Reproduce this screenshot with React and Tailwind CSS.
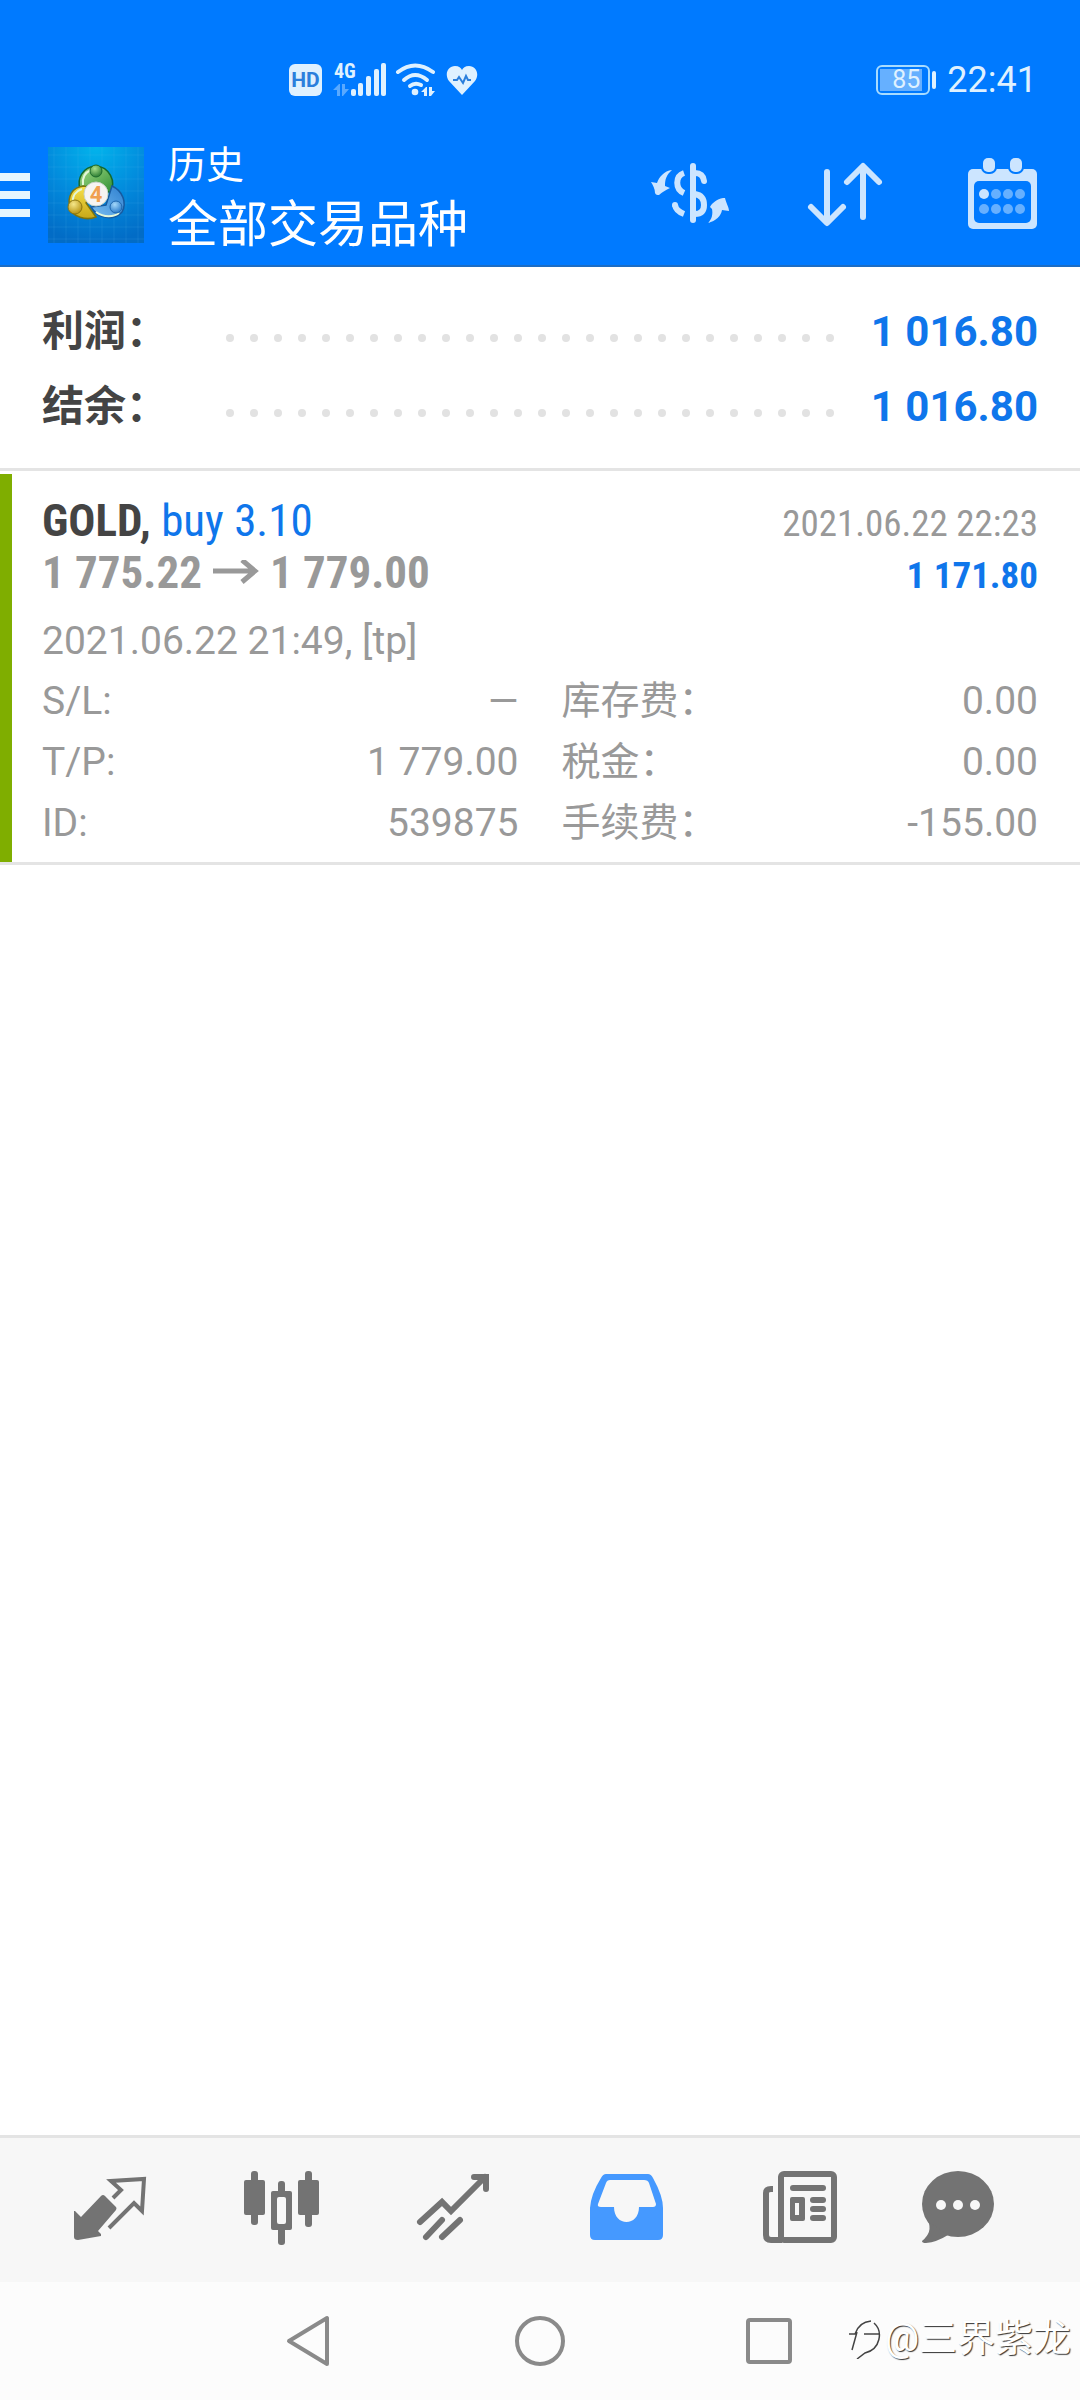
import React from "react";

const summary = [
  { label: "利润：", value: "1 016.80" },
  { label: "结余：", value: "1 016.80" },
];

const details = [
  { label: "S/L:", value: "—", label2: "库存费：", value2: "0.00" },
  { label: "T/P:", value: "1 779.00", label2: "税金：", value2: "0.00" },
  { label: "ID:", value: "539875", label2: "手续费：", value2: "-155.00" },
];

const SignalIcon = () => (
  <svg className="w-[54px] h-11" viewBox="0 0 54 44" fill="#dff1ff">
    <text x="1" y="20" fontSize="20" fontWeight="700" fontFamily="Roboto Condensed, Roboto, sans-serif">4G</text>
    <g opacity="0.4">
      <path d="M0 32 L6 26 H7 V38 H4 V32 Z" />
      <path d="M9 26 H12 V31 H16 L10 38 H9 Z" />
    </g>
    <rect x="18" y="31" width="5" height="7" rx="2" />
    <rect x="25" y="25" width="5" height="13" rx="2" />
    <rect x="33" y="18" width="5" height="20" rx="2" />
    <rect x="41" y="11" width="5" height="27" rx="2" />
    <rect x="48" y="5" width="5" height="33" rx="2" />
  </svg>
);

const WifiIcon = () => (
  <svg className="w-[45px] h-9" viewBox="0 0 45 36" fill="none" stroke="#dff1ff" strokeWidth="4" strokeLinecap="round">
    <path d="M5 10 Q22 -3 40 10" />
    <path d="M11 18 Q22 8 34 18" />
    <path d="M17 24 Q22 20 28 23" />
    <circle cx="22" cy="30" r="3.3" fill="#dff1ff" stroke="none" />
    <path d="M28 30 L33 25 H34 V34 H31 V30 Z M36 25 H39 V29 H42 L38 34 H36 Z" fill="#dff1ff" stroke="none" />
  </svg>
);

const HeartIcon = () => (
  <svg className="w-[34px] h-9" viewBox="0 0 34 36">
    <path d="M17 33 L4 19 C-1 12 3 4 10 4 C14 4 16 6 17 8 C18 6 20 4 24 4 C31 4 35 12 30 19 Z" fill="#dff1ff" />
    <path d="M8 18 H12 L14 15 L18 21 L21 14 L23 18 H26" fill="none" stroke="#2b7fdc" strokeWidth="2" />
  </svg>
);

const LogoIcon = () => (
  <svg className="size-24 shrink-0" viewBox="0 0 96 96">
    <defs>
      <radialGradient id="logoBg" cx="0.5" cy="0" r="1">
        <stop offset="0" stopColor="#02b4ec" />
        <stop offset="0.55" stopColor="#0289dc" />
        <stop offset="1" stopColor="#026cc6" />
      </radialGradient>
      <linearGradient id="logoGreen" x1="0" y1="0" x2="1" y2="1">
        <stop offset="0" stopColor="#a5dc86" />
        <stop offset="1" stopColor="#2f8f35" />
      </linearGradient>
      <linearGradient id="logoYellow" x1="0" y1="0" x2="0" y2="1">
        <stop offset="0" stopColor="#f7e04a" />
        <stop offset="1" stopColor="#c9a818" />
      </linearGradient>
      <linearGradient id="logoBlue" x1="1" y1="0" x2="0" y2="1">
        <stop offset="0" stopColor="#2d7fd0" />
        <stop offset="1" stopColor="#7cc0f2" />
      </linearGradient>
      <radialGradient id="ballGreen" cx="0.4" cy="0.3" r="0.7">
        <stop offset="0" stopColor="#a9e08c" />
        <stop offset="1" stopColor="#2c7d33" />
      </radialGradient>
      <radialGradient id="ballYellow" cx="0.4" cy="0.3" r="0.7">
        <stop offset="0" stopColor="#f5e78a" />
        <stop offset="1" stopColor="#b89412" />
      </radialGradient>
      <radialGradient id="ballBlue" cx="0.4" cy="0.3" r="0.7">
        <stop offset="0" stopColor="#a4d8fa" />
        <stop offset="1" stopColor="#2b7ccb" />
      </radialGradient>
    </defs>
    <rect width="96" height="96" fill="url(#logoBg)" />
    <path
      d="M6 0V96M18 0V96M30 0V96M42 0V96M54 0V96M66 0V96M78 0V96M90 0V96M0 8H96M0 20H96M0 32H96M0 44H96M0 56H96M0 68H96M0 80H96M0 92H96"
      stroke="#5cc4f5"
      strokeOpacity="0.15"
      strokeWidth="1"
    />
    <path d="M48 19 C34 20 29 32 32 42 L48 36 L62 46 C69 34 61 20 48 19 Z" fill="url(#logoGreen)" stroke="#14692c" strokeWidth="1.5" />
    <path d="M36 39 C24 40 19 50 22 60 C24 70 38 74 48 70 L38 56 L46 42 Z" fill="url(#logoYellow)" stroke="#7d7410" strokeWidth="1.5" />
    <path d="M64 39 C75 44 79 56 74 65 C66 74 50 72 43 60 L58 58 Z" fill="url(#logoBlue)" stroke="#175a9f" strokeWidth="1.5" />
    <path d="M35 38 C34 30 38 25 43 23 M25 56 C24 49 28 44 34 42 M48 65 C56 71 66 70 71 66" fill="none" stroke="#e4f7d8" strokeWidth="2" />
    <circle cx="48" cy="24" r="6" fill="url(#ballGreen)" stroke="#1d6b2d" strokeWidth="1" />
    <circle cx="27" cy="60" r="7" fill="url(#ballYellow)" stroke="#8b7610" strokeWidth="1" />
    <circle cx="68" cy="60" r="6" fill="url(#ballBlue)" stroke="#1d66ad" strokeWidth="1" />
    <circle cx="48" cy="47" r="12" fill="#f6f4f2" stroke="#c9d2c9" strokeWidth="1" />
    <text x="48" y="55" textAnchor="middle" fontSize="22" fontWeight="700" fontFamily="Roboto, sans-serif" fill="#f0a050">4</text>
  </svg>
);

const CurrencyIcon = () => (
  <svg className="w-[90px] h-[72px]" viewBox="0 0 90 72" fill="none" stroke="#cce5ff" strokeWidth="6" strokeLinecap="round">
    <path d="M48 7 V61" />
    <path d="M50 14 Q58 14 59 22" />
    <path d="M50 35 C56 36 59 40 59 46 C59 52 56 55 50 55" />
    <path d="M39 14 C30 17 30 30 39 34" strokeLinecap="butt" />
    <path d="M30 46 Q31 52 39 55" strokeLinecap="butt" />
    <circle cx="30" cy="46" r="3" fill="#cce5ff" stroke="none" />
    <path d="M27 11 C21 16 20 21 20 27 L25 29 C21 31 17 33 14 36 C12 36 11 36 10 34 C10 30 8 26 6 23 L12 24 C14 18 19 12 27 11 Z" fill="#cce5ff" stroke="none" />
    <path d="M63 64 C67 60 68 55 67 50 L65 48 C67 44 72 40 78 39 L80 39 C81 44 84 48 84 52 L77 51 C76 57 71 62 63 64 Z" fill="#cce5ff" stroke="none" />
  </svg>
);

const SortIcon = () => (
  <svg className="w-[90px] h-[72px]" viewBox="0 0 90 72" fill="none" stroke="#cce5ff" strokeWidth="6" strokeLinecap="round" strokeLinejoin="round">
    <path d="M26 13 V63 M10 48 L26 64 L42 48" />
    <path d="M62 58 V8 M46 23 L62 7 L78 23" />
  </svg>
);

const CalendarIcon = () => (
  <svg className="w-[90px] h-[78px]" viewBox="0 0 90 78" fill="#cce5ff">
    <rect x="11" y="13" width="69" height="60" rx="5" />
    <rect x="17" y="25" width="57" height="42" rx="5" fill="#007aff" />
    <rect x="24" y="0" width="16" height="18" rx="7" fill="#007aff" />
    <rect x="51" y="0" width="16" height="18" rx="7" fill="#007aff" />
    <rect x="26" y="2" width="12" height="14" rx="5" />
    <rect x="53" y="2" width="12" height="14" rx="5" />
    <circle cx="27" cy="38" r="5" />
    <g fill="#66b0ff">
      <circle cx="39" cy="38" r="5" />
      <circle cx="51" cy="38" r="5" />
      <circle cx="63" cy="38" r="5" />
      <circle cx="27" cy="53" r="5" />
      <circle cx="39" cy="53" r="5" />
      <circle cx="51" cy="53" r="5" />
      <circle cx="63" cy="53" r="5" />
    </g>
  </svg>
);

const QuotesIcon = () => (
  <svg className="w-[108px] h-[90px]" viewBox="0 0 108 90">
    <path d="M22 46 L28 52 L48 31 Q50 29 52 31 L63 42 Q64 43 63 45 L45 66 L48 69 V71 L25 75 Q21 75 21 72 V46 Z" fill="#737373" />
    <path d="M60 33 L68 25 L58 16 L91 14 L89 46 L81 38 L56 63" fill="none" stroke="#737373" strokeWidth="4" />
  </svg>
);

const ChartIcon = () => (
  <svg className="w-[108px] h-[90px]" viewBox="0 0 108 90" fill="#737373">
    <rect x="25" y="6" width="7" height="54" rx="3" />
    <rect x="18" y="15" width="21" height="35" rx="2" />
    <rect x="79" y="6" width="7" height="56" rx="3" />
    <rect x="72" y="15" width="21" height="35" rx="2" />
    <rect x="52" y="16" width="7" height="64" rx="3" />
    <rect x="45" y="26" width="21" height="39" rx="2" />
    <rect x="51" y="32" width="9" height="27" rx="2" fill="#f7f7f7" />
  </svg>
);

const TradeIcon = () => (
  <svg className="w-[108px] h-[90px]" viewBox="0 0 108 90" fill="none" stroke="#737373" strokeWidth="6" strokeLinecap="round">
    <path d="M21 57 L43 37 L52 46 L86 12" />
    <path d="M75 12 H87 V24" />
    <path d="M43 55 L27 72 M61 55 L43 72" />
  </svg>
);

const HistoryIcon = () => (
  <svg className="w-[108px] h-[90px]" viewBox="0 0 108 90">
    <path d="M33 9 H75 Q78 9 80 13 Q90 31 90 43 V70 Q90 75 85 75 H22 Q17 75 17 70 V43 Q18 29 28 13 Q30 9 33 9 Z" fill="#4599ff" />
    <path d="M37 15 H71 Q75 15 76 18 L83 39 Q83 42 80 42 H66 C66 62 41 62 41 42 H28 Q24 42 25 39 L33 18 Q34 15 37 15 Z" fill="#f7f7f7" />
  </svg>
);

const NewsIcon = () => (
  <svg className="w-[108px] h-[90px]" viewBox="0 0 108 90" fill="none" stroke="#737373" strokeWidth="6">
    <rect x="35" y="9" width="53" height="66" rx="3" />
    <path d="M27 24 H25 Q20 24 20 28 V70 Q20 75 25 75 H36" />
    <g fill="#737373" stroke="none">
      <rect x="44" y="20" width="36" height="6" rx="3" />
      <path d="M46 32 H57 Q59 32 59 34 V54 Q59 56 57 56 H46 Q44 56 44 54 V34 Q44 32 46 32 Z M49 38 V50 H53 V38 Z" fillRule="evenodd" />
      <rect x="64" y="32" width="16" height="6" rx="3" />
      <rect x="64" y="41" width="16" height="6" rx="3" />
      <rect x="64" y="50" width="16" height="6" rx="3" />
    </g>
  </svg>
);

const ChatIcon = () => (
  <svg className="w-[108px] h-[90px]" viewBox="0 0 108 90" fill="#737373">
    <ellipse cx="39" cy="39" rx="36" ry="33" />
    <path d="M9 56 Q14 67 3 76 Q3 78 7 78 Q18 77 29 70 Z" />
    <g fill="#f7f7f7">
      <circle cx="22" cy="40" r="5" />
      <circle cx="39" cy="40" r="5" />
      <circle cx="56" cy="40" r="5" />
    </g>
  </svg>
);

const tabs = [
  { name: "行情", icon: <QuotesIcon /> },
  { name: "图表", icon: <ChartIcon /> },
  { name: "交易", icon: <TradeIcon /> },
  { name: "历史", icon: <HistoryIcon /> },
  { name: "新闻", icon: <NewsIcon /> },
  { name: "消息", icon: <ChatIcon /> },
];

const App = () => (
  <div className="min-h-screen flex flex-col bg-white font-['Roboto','Noto_Sans_CJK_SC',sans-serif]">
    <header className="bg-[#007aff] border-b-2 border-[#1c6dc4] text-white">
      {/* Status bar */}
      <div className="h-28 pt-12 pl-[289px] pr-[43px] flex items-center text-[#dff1ff]">
        <span className="w-[33px] h-8 mr-[11px] rounded-md bg-[#dff1ff] text-[#2b7fdc] text-[21px] leading-8 font-bold text-center">HD</span>
        <SignalIcon />
        <span className="w-[6px]" />
        <WifiIcon />
        <span className="w-[7px]" />
        <HeartIcon />
        <div className="ml-auto flex items-center">
          <span className="w-[54px] h-[30px] p-[2px] rounded-md border-2 border-[#a8dcff]">
            <span className="block w-[42px] h-[22px] bg-[#66b0ff] text-[25px] leading-[22px] text-right pr-[2px]">85</span>
          </span>
          <span className="w-1 h-[18px] ml-[2px] rounded-full bg-[#dff1ff]" />
          <span className="ml-[11px] text-[36px] leading-[40px]">22:41</span>
        </div>
      </div>

      {/* Title bar */}
      <div className="pt-[23px] pb-[10px] pr-[33px] flex items-center">
        <button aria-label="菜单" className="w-[30px] mr-[18px] flex flex-col gap-[10px]">
          <span className="block h-2 bg-[#e6f6ff]" />
          <span className="block h-2 bg-[#e6f6ff]" />
          <span className="block h-2 bg-[#e6f6ff]" />
        </button>
        <LogoIcon />
        <div className="ml-6">
          <p className="text-[38px] leading-[60px]">历史</p>
          <h1 className="text-[50px] leading-[60px]">全部交易品种</h1>
        </div>
        <div className="ml-auto flex items-center gap-[66px]">
          <button aria-label="货币"><CurrencyIcon /></button>
          <button aria-label="排序"><SortIcon /></button>
          <button aria-label="日期"><CalendarIcon /></button>
        </div>
      </div>
    </header>

    <main className="flex-1">
      {/* Summary */}
      <section className="pt-[27px] pb-6 border-b-[3px] border-[#e4e4e4]">
        {summary.map((row) => (
          <div key={row.label} className="h-[75px] px-[42px] flex items-center text-[42px] leading-[60px] font-bold">
            <span className="w-[184px] text-[#444444]">{row.label}</span>
            <span className="flex-1 mt-3 flex justify-between">
              {Array.from({ length: 26 }, (_, i) => (
                <span key={i} className="size-2 rounded-full bg-[#e2e2e2]" />
              ))}
            </span>
            <span className="w-[204px] text-right text-[#0f76eb]">{row.value}</span>
          </div>
        ))}
      </section>

      {/* Deal */}
      <section className="pt-[3px] border-b-[3px] border-[#e4e4e4] text-[#999999]">
        <div className="border-l-12 border-[#7fae00] pl-[30px] pr-[42px] pt-[21px] pb-2">
          <div className="flex items-baseline justify-between font-['Roboto_Condensed','Roboto',sans-serif] leading-[51px]">
            <p className="text-[45px] text-[#0f76eb]">
              <b className="text-[#444444]">GOLD,</b> buy 3.10
            </p>
            <p className="text-[37px]">2021.06.22 22:23</p>
          </div>
          <div className="flex items-baseline justify-between font-['Roboto_Condensed','Roboto',sans-serif] leading-[47px] font-bold">
            <p className="text-[45px]">
              1 775.22
              <svg className="inline-block w-[46px] h-7 mx-[11px] align-baseline" viewBox="0 0 46 28" fill="none" stroke="#999999" strokeWidth="5">
                <path d="M0 11 H42 M29 0 L42 11 L29 22" />
              </svg>
              1 779.00
            </p>
            <p className="text-[37px] text-[#0f76eb]">1 171.80</p>
          </div>
          <p className="mt-3 text-[39px] leading-[60px]">2021.06.22 21:49, [tp]</p>
          <div className="text-[39px] leading-[61px]">
            {details.map((row) => (
              <div key={row.label} className="grid grid-cols-2 gap-[43px]">
                <p className="flex justify-between">
                  <span>{row.label}</span>
                  <span>{row.value}</span>
                </p>
                <p className="flex justify-between">
                  <span>{row.label2}</span>
                  <span>{row.value2}</span>
                </p>
              </div>
            ))}
          </div>
        </div>
      </section>
    </main>

    {/* Tabs */}
    <nav className="h-[147px] px-5 flex items-center border-t-[3px] border-[#e4e4e4] bg-[#f7f7f7]">
      {tabs.map((tab) => (
        <button key={tab.name} aria-label={tab.name} className="flex-1 flex justify-center">
          {tab.icon}
        </button>
      ))}
    </nav>

    {/* System navigation */}
    <div className="relative h-[118px] flex items-center justify-center gap-[170px] bg-[#fcfcfc]">
      <button aria-label="返回">
        <svg className="size-[60px]" viewBox="0 0 60 60" fill="none" stroke="#8a8a8a" strokeWidth="4" strokeLinejoin="round">
          <path d="M9 30 L47 7 V53 Z" />
        </svg>
      </button>
      <button aria-label="主屏幕">
        <svg className="size-[60px]" viewBox="0 0 60 60" fill="none" stroke="#8a8a8a" strokeWidth="4">
          <circle cx="30" cy="30" r="23" />
        </svg>
      </button>
      <button aria-label="最近任务">
        <svg className="size-[60px]" viewBox="0 0 60 60" fill="none" stroke="#8a8a8a" strokeWidth="4">
          <rect x="8" y="9" width="42" height="42" rx="2" />
        </svg>
      </button>
      <div className="absolute right-[9px] top-7 flex items-center text-[38px] leading-[56px] text-white [text-shadow:1px_1px_1px_#333333]">
        <svg className="w-9 h-[42px]" viewBox="0 0 36 42" fill="none" stroke="#444444" strokeWidth="1.5">
          <path d="M0 17 H6 Q10 5 22 4 M8 15 L3 33 M15 17 H30 M25 6 C34 14 32 32 16 36 L8 42" />
        </svg>
        @三界紫龙
      </div>
    </div>
  </div>
);

export default App;
